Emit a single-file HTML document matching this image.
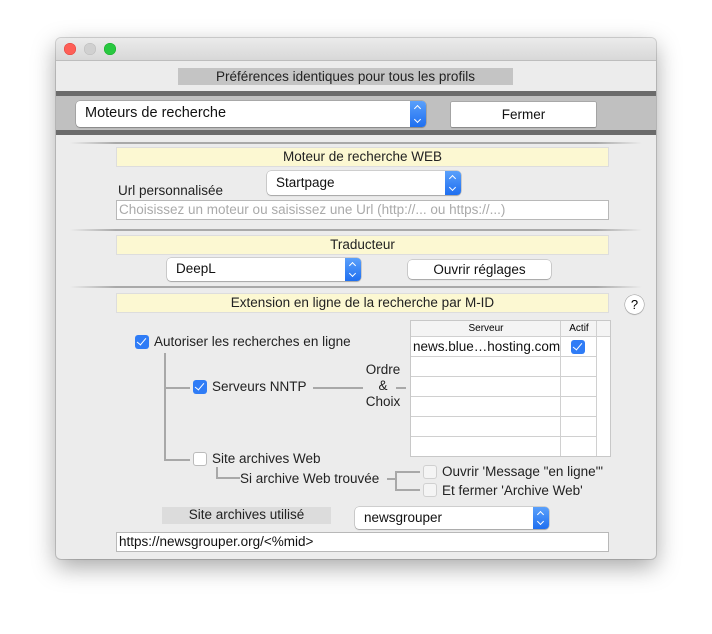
<!DOCTYPE html><html><head><meta charset="utf-8"><style>
body{margin:0;width:712px;height:634px;background:#fff;font-family:"Liberation Sans",sans-serif;position:relative;overflow:hidden}
.a{position:absolute}
.win{left:56px;top:38px;width:600px;height:521px;background:#ececec;border-radius:5px;box-shadow:0 8px 24px rgba(0,0,0,.35),0 0 0 1px rgba(0,0,0,.15);overflow:hidden}
.t{font-size:13.5px;color:#222;white-space:nowrap}
.yel{background:#fcf8d2;border:1px solid #ddd;text-align:center;font-size:13.5px;color:#222;line-height:18px;box-sizing:border-box}
.pop{background:#fff;border-radius:4px;box-shadow:0 0 0 .5px rgba(0,0,0,.25),0 1px 1px rgba(0,0,0,.2);font-size:13.5px;color:#111;box-sizing:border-box;padding-left:9px}
.pop i{position:absolute;right:0;top:0;bottom:0;width:16px;background:linear-gradient(#5aa0fb,#1f6ff0);border-radius:0 4px 4px 0}
.pop i:before{content:"";position:absolute;left:5px;top:5px;width:4px;height:4px;border-left:1.3px solid #fff;border-top:1.3px solid #fff;transform:rotate(45deg)}
.pop i:after{content:"";position:absolute;left:5px;bottom:5px;width:4px;height:4px;border-right:1.3px solid #fff;border-bottom:1.3px solid #fff;transform:rotate(45deg)}
.btn{background:#fff;border-radius:4px;box-shadow:0 0 0 .5px rgba(0,0,0,.25),0 1px 1px rgba(0,0,0,.2);font-size:13.5px;text-align:center;color:#111}
.sep{height:2px;background:linear-gradient(90deg,rgba(150,150,150,0),#a9a9a9 8%,#a9a9a9 92%,rgba(150,150,150,0))}
.cb{width:14px;height:14px;border-radius:3px;box-sizing:border-box}
.on{background:#2f7cf6}
.on:after{content:"";position:absolute;left:4px;top:1px;width:4px;height:8px;border-right:1.6px solid #fff;border-bottom:1.6px solid #fff;transform:rotate(40deg)}
.off{background:#fff;border:1px solid #bbb}
.dis{background:#f4f4f4;border:1px solid #d0d0d0}
.ln{background:#a8a8a8}
.tf{background:#fff;border:1px solid #b8b8b8;box-sizing:border-box;font-size:13.5px;line-height:18px;padding-left:2px}
</style></head><body>
<div class="a win">
 <div class="a" style="left:0;top:0;width:600px;height:22px;background:linear-gradient(#ebebeb,#d8d8d8);border-bottom:1px solid #bdbdbd"></div>
 <div class="a" style="left:8px;top:5px;width:12px;height:12px;border-radius:50%;background:#fe5f57;box-shadow:inset 0 0 0 .5px #e0443e"></div>
 <div class="a" style="left:28px;top:5px;width:12px;height:12px;border-radius:50%;background:#d0d0d0;box-shadow:inset 0 0 0 .5px #bbb"></div>
 <div class="a" style="left:48px;top:5px;width:12px;height:12px;border-radius:50%;background:#28c840;box-shadow:inset 0 0 0 .5px #1aab29"></div>
</div>
<div class="a t" style="left:178px;top:68px;width:335px;height:17px;background:#c4c4c4;text-align:center;line-height:17px">Préférences identiques pour tous les profils</div>
<div class="a" style="left:56px;top:91px;width:600px;height:5px;background:#6b6b6b"></div>
<div class="a" style="left:56px;top:96px;width:600px;height:34px;background:#c0c0c0"></div>
<div class="a" style="left:56px;top:130px;width:600px;height:5px;background:#6b6b6b"></div>
<div class="a pop" style="left:76px;top:101px;width:350px;height:26px;line-height:25px;font-size:14.5px">Moteurs de recherche<i></i></div>
<div class="a btn" style="left:451px;top:102px;width:145px;height:25px;line-height:26px;border-radius:1px">Fermer</div>
<div class="a sep" style="left:70px;top:142px;width:572px"></div>
<div class="a yel" style="left:116px;top:147px;width:493px;height:20px">Moteur de recherche WEB</div>
<div class="a pop" style="left:267px;top:171px;width:194px;height:24px;line-height:23px">Startpage<i></i></div>
<div class="a t" style="left:118px;top:183px">Url personnalisée</div>
<div class="a tf" style="left:116px;top:200px;width:493px;height:20px;color:#aaa">Choisissez un moteur ou saisissez une Url (http://... ou https://...)</div>
<div class="a sep" style="left:70px;top:229px;width:572px"></div>
<div class="a yel" style="left:116px;top:235px;width:493px;height:20px">Traducteur</div>
<div class="a pop" style="left:167px;top:258px;width:194px;height:23px;line-height:22px">DeepL<i></i></div>
<div class="a btn" style="left:408px;top:260px;width:143px;height:19px;line-height:19px">Ouvrir réglages</div>
<div class="a sep" style="left:70px;top:286px;width:572px"></div>
<div class="a yel" style="left:116px;top:293px;width:493px;height:20px">Extension en ligne de la recherche par M-ID</div>
<div class="a" style="left:625px;top:295px;width:19px;height:19px;border-radius:50%;background:#fff;box-shadow:0 0 0 .5px #999,0 1px 1px rgba(0,0,0,.2);text-align:center;font-size:13px;line-height:19px">?</div>
<div class="a cb on" style="left:135px;top:335px"></div>
<div class="a t" style="left:154px;top:334px">Autoriser les recherches en ligne</div>
<div class="a ln" style="left:164px;top:353px;width:2px;height:107px"></div>
<div class="a ln" style="left:164px;top:387px;width:26px;height:2px"></div>
<div class="a ln" style="left:164px;top:459px;width:26px;height:2px"></div>
<div class="a cb on" style="left:193px;top:380px"></div>
<div class="a t" style="left:212px;top:379px">Serveurs NNTP</div>
<div class="a ln" style="left:313px;top:387px;width:50px;height:2px"></div>
<div class="a t" style="left:363px;top:362px;width:40px;text-align:center;line-height:16px">Ordre<br>&amp;<br>Choix</div>
<div class="a ln" style="left:396px;top:387px;width:10px;height:2px"></div>
<div class="a" style="left:410px;top:320px;width:201px;height:137px;background:#fff;border:1px solid #c8c8c8;box-sizing:border-box"></div>
<div class="a" style="left:411px;top:321px;width:199px;height:15px;background:#f4f4f4;border-bottom:1px solid #d0d0d0"></div>
<div class="a" style="left:411px;top:321px;width:150px;text-align:center;font-size:10px;line-height:15px">Serveur</div>
<div class="a" style="left:561px;top:321px;width:36px;text-align:center;font-size:10px;line-height:15px">Actif</div>
<div class="a" style="left:560px;top:321px;width:1px;height:135px;background:#d0d0d0"></div>
<div class="a" style="left:596px;top:321px;width:1px;height:135px;background:#d0d0d0"></div>
<div class="a" style="left:411px;top:356px;width:186px;height:1px;background:#d0d0d0"></div>
<div class="a" style="left:411px;top:376px;width:186px;height:1px;background:#d0d0d0"></div>
<div class="a" style="left:411px;top:396px;width:186px;height:1px;background:#d0d0d0"></div>
<div class="a" style="left:411px;top:416px;width:186px;height:1px;background:#d0d0d0"></div>
<div class="a" style="left:411px;top:436px;width:186px;height:1px;background:#d0d0d0"></div>
<div class="a t" style="left:413px;top:339px;color:#111">news.blue…hosting.com</div>
<div class="a cb on" style="left:571px;top:340px"></div>
<div class="a cb off" style="left:193px;top:452px"></div>
<div class="a t" style="left:212px;top:451px">Site archives Web</div>
<div class="a ln" style="left:216px;top:467px;width:2px;height:11px"></div>
<div class="a ln" style="left:216px;top:477px;width:24px;height:2px"></div>
<div class="a t" style="left:240px;top:471px">Si archive Web trouvée</div>
<div class="a ln" style="left:387px;top:478px;width:9px;height:2px"></div>
<div class="a ln" style="left:395px;top:471px;width:2px;height:19px"></div>
<div class="a ln" style="left:395px;top:471px;width:25px;height:2px"></div>
<div class="a ln" style="left:395px;top:489px;width:25px;height:2px"></div>
<div class="a cb dis" style="left:423px;top:465px"></div>
<div class="a cb dis" style="left:423px;top:483px"></div>
<div class="a t" style="left:442px;top:464px">Ouvrir 'Message "en ligne"'</div>
<div class="a t" style="left:442px;top:483px">Et fermer 'Archive Web'</div>
<div class="a t" style="left:162px;top:507px;width:169px;height:17px;background:#dcdcdc;text-align:center;line-height:16px">Site archives utilisé</div>
<div class="a pop" style="left:355px;top:507px;width:194px;height:22px;line-height:22px">newsgrouper<i></i></div>
<div class="a tf" style="left:116px;top:532px;width:493px;height:20px;color:#111">https://newsgrouper.org/&lt;%mid&gt;</div>
</body></html>
